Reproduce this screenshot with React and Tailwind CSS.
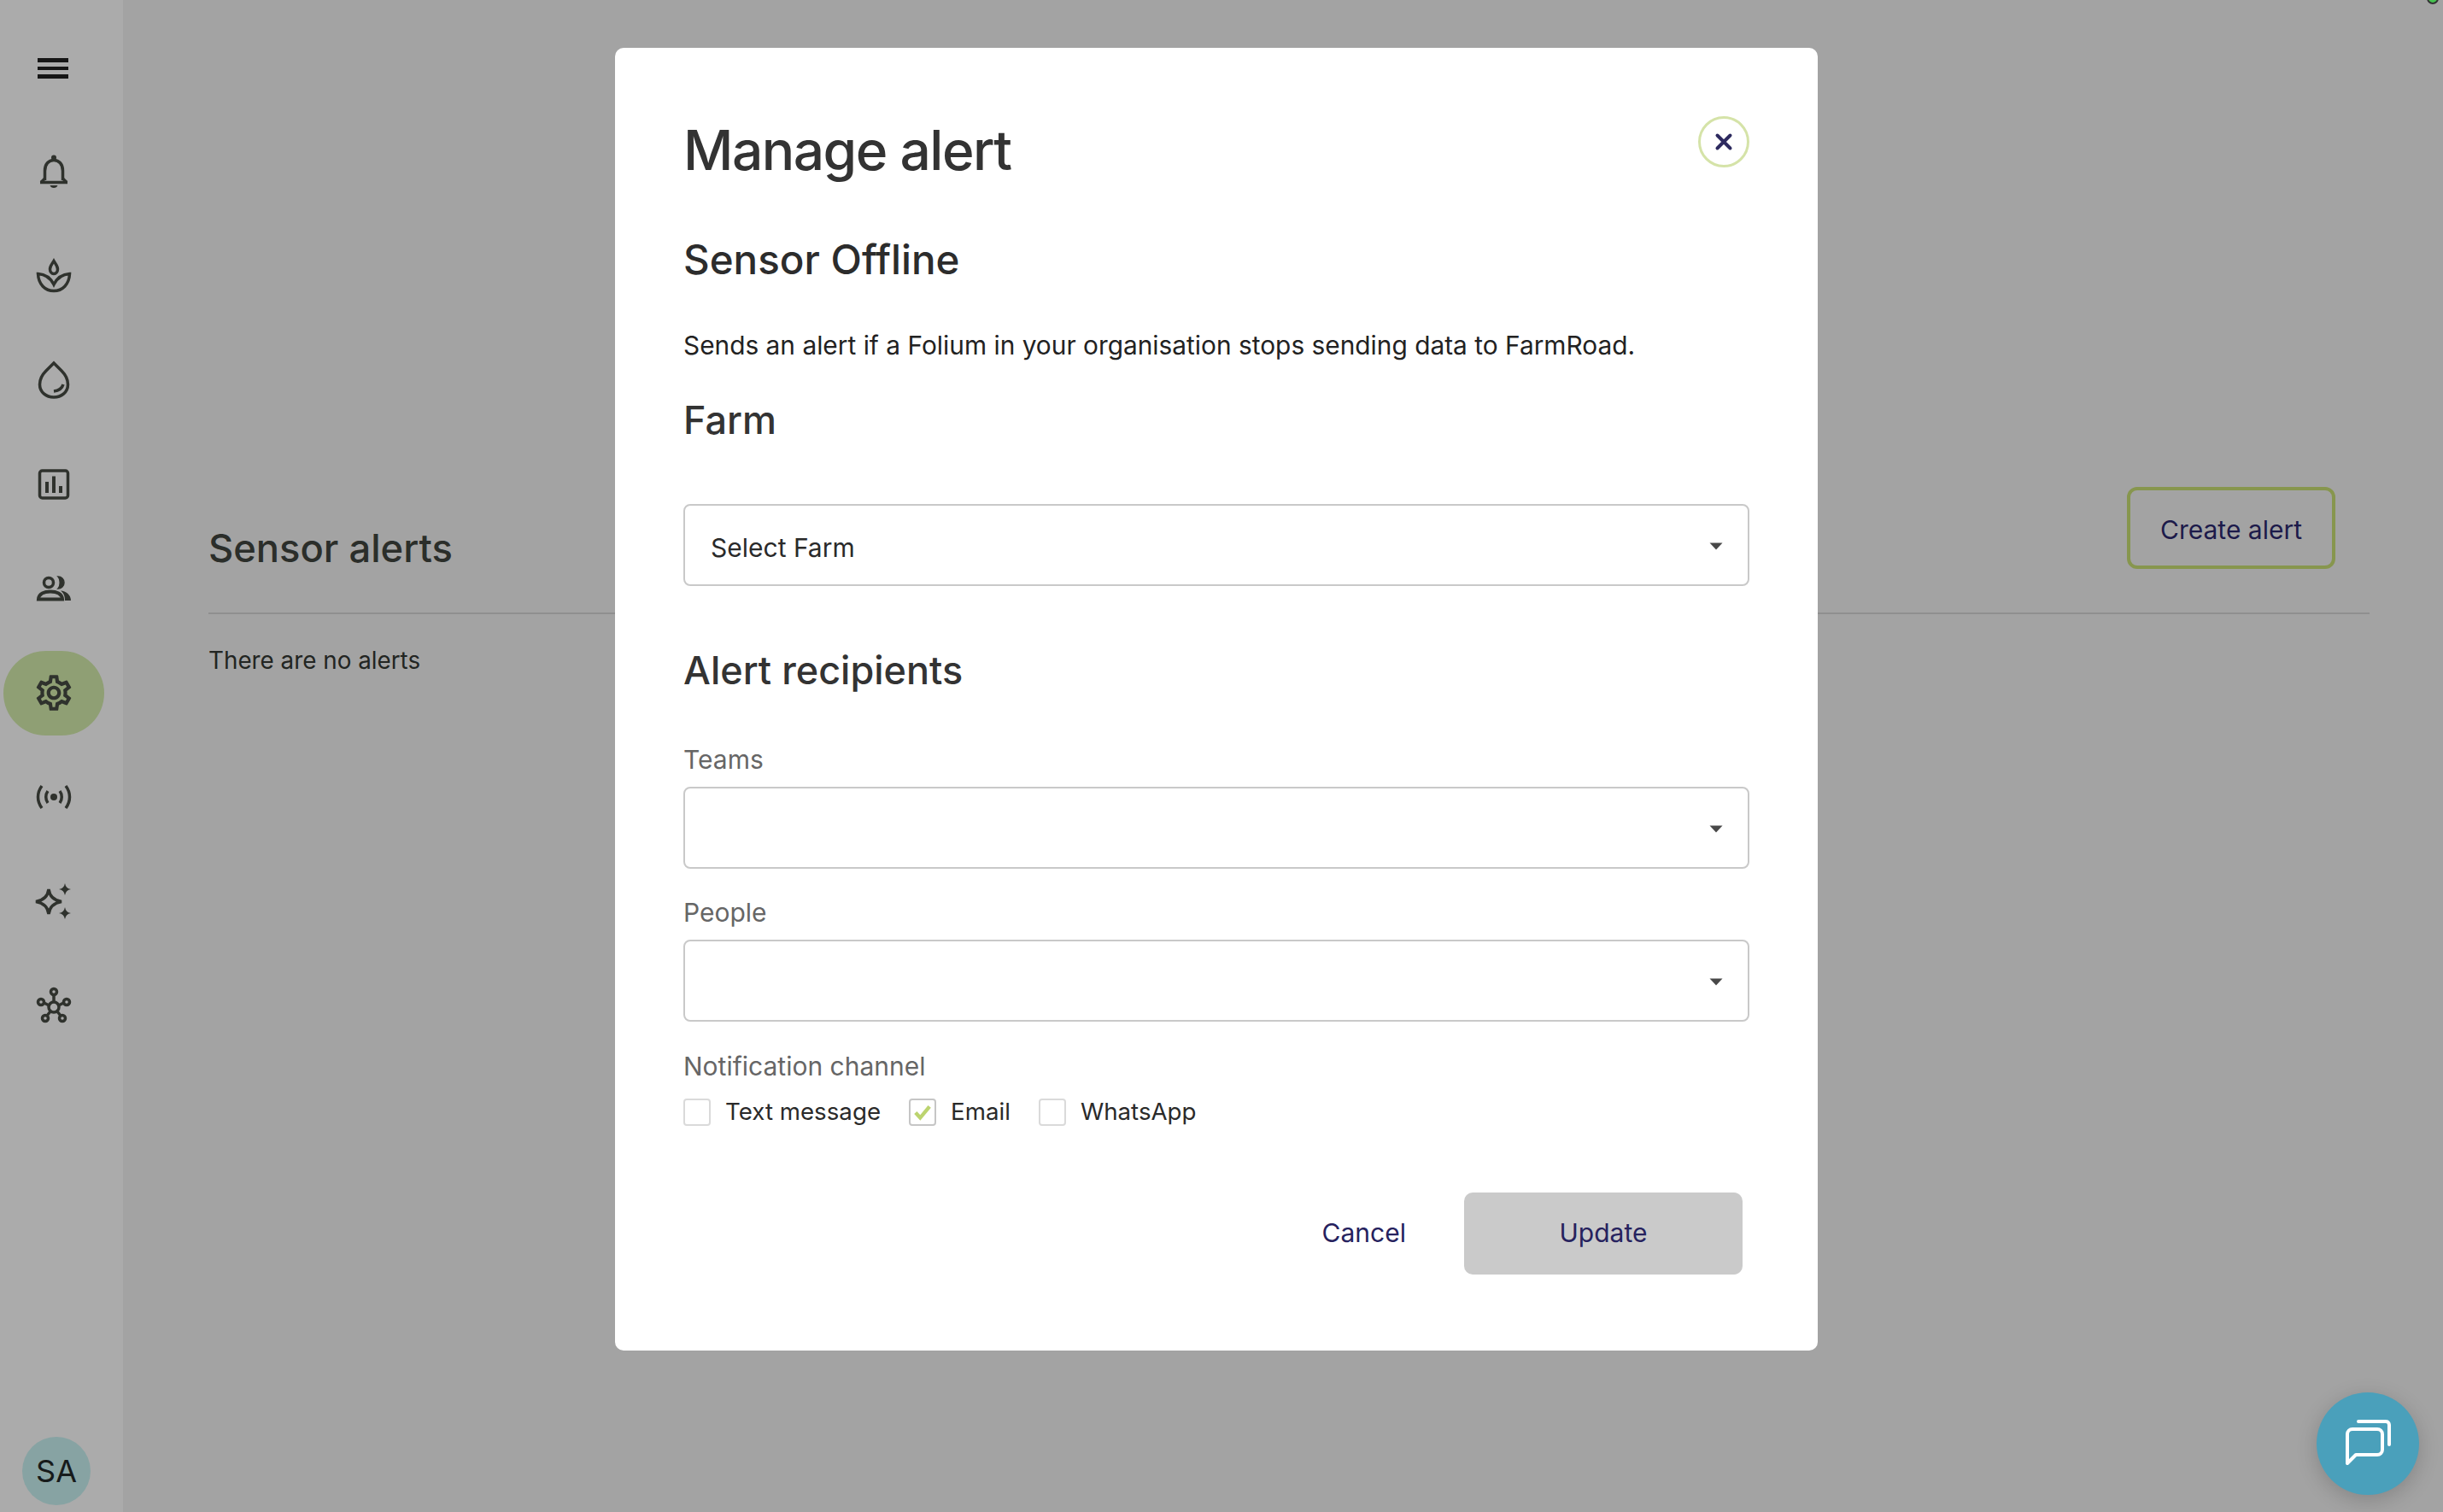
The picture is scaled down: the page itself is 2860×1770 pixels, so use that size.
import React from "react";
import { MdOutlineSettings } from "react-icons/md";

const ink = "#2f322d";

const Icon = ({ children }) => (
  <svg width="40" height="40" viewBox="0 0 40 40" fill="none" stroke={ink} strokeWidth="3.5" className="overflow-visible">
    {children}
  </svg>
);

const navItems = [
  {
    id: "alerts",
    icon: (
      <Icon>
        <circle cx="20" cy="3.5" r="3" fill={ink} stroke="none" />
        <path d="M9.5 30V19C9.5 11 14 6.5 20 6.5S30.5 11 30.5 19V30" />
        <path d="M4 32.5H36" />
        <path d="M9.5 28L5 32.5M30.5 28L35 32.5" />
        <path d="M15.5 36H24.5C23.5 40 16.5 40 15.5 36Z" fill={ink} stroke="none" />
      </Icon>
    ),
  },
  {
    id: "crops",
    icon: (
      <Icon>
        <path d="M20 2.5C18 6 15.5 8.5 15.5 12C15.5 15 17.5 17.5 20 17.5S24.5 15 24.5 12C24.5 8.5 22 6 20 2.5Z" />
        <path d="M1.5 17.5C2 30 10 37.5 20 37.5S38 30 38.5 17.5C30 18 24 22 20 30C16 22 10 18 1.5 17.5Z" />
      </Icon>
    ),
  },
  {
    id: "water",
    icon: (
      <Icon>
        <path d="M20 0L29 9C34 14 36.5 19 36.5 25C36.5 34 29 40 20 40S3.5 34 3.5 25C3.5 19 6 14 11 9Z" />
        <path d="M20 33Q29 32 31 25" />
      </Icon>
    ),
  },
  {
    id: "reports",
    icon: (
      <Icon>
        <rect x="3.5" y="4" width="33" height="32" rx="3" />
        <path d="M10 17H14V30H10ZM18 10.5H22V30H18ZM26 22H30V30H26Z" fill={ink} stroke="none" />
      </Icon>
    ),
  },
  {
    id: "people",
    icon: (
      <Icon>
        <circle cx="14" cy="13" r="5.5" />
        <path d="M25 6A7 7 0 0 1 25 20C28 17 28 9 25 6Z" fill={ink} stroke={ink} strokeWidth="1.5" />
        <path d="M2 32.5C2.5 26 9 23.5 16 23.5S29.5 26 30 32.5Z" strokeWidth="4" />
        <path d="M28 22.5C34 23 40 27 40 34H33C33 29 32 26 28 22.5Z" fill={ink} stroke="none" />
      </Icon>
    ),
  },
  {
    id: "settings",
    active: true,
    icon: <MdOutlineSettings size={50} color={ink} />,
  },
  {
    id: "sensors",
    icon: (
      <Icon>
        <circle cx="20" cy="20" r="4" fill={ink} stroke="none" />
        <path d="M13 13C10 17 10 23 13 27M27 13C30 17 30 23 27 27" strokeWidth="3.5" />
        <path d="M6 7C0 15 0 25 6 33M34 7C40 15 40 25 34 33" strokeWidth="3.5" />
      </Icon>
    ),
  },
  {
    id: "insights",
    icon: (
      <Icon>
        <path d="M14 6C15 14 20 19 29 20.5C20 22 15 27 14 35C13 27 8 22 -1 20.5C8 19 13 14 14 6Z" />
        <path d="M33 -1Q34 5 40 6Q34 7 33 13Q32 7 26 6Q32 5 33 -1ZM33 27Q34 33 40 34Q34 35 33 41Q32 35 26 34Q32 33 33 27Z" fill={ink} stroke="none" />
      </Icon>
    ),
  },
  {
    id: "network",
    icon: (
      <Icon>
        <circle cx="20" cy="22" r="6" />
        <circle cx="20" cy="4" r="3.5" />
        <circle cx="5" cy="16" r="3.5" />
        <circle cx="35" cy="16" r="3.5" />
        <circle cx="10" cy="35" r="3.5" />
        <circle cx="30" cy="35" r="3.5" />
        <path d="M20 8V16M8.5 17L14.5 20M31.5 17L25.5 20M12 32L16 27M28 32L24 27" />
      </Icon>
    ),
  },
];

const Sidebar = () => (
  <aside className="flex h-full w-[144px] shrink-0 flex-col bg-[#ababab] pt-[18px]">
    <div className="flex h-[122px] w-[126px] items-center justify-center pt-[2px] pr-[2px]">
      <div className="flex w-[36px] flex-col gap-[5px]">
        <span className="h-[4.5px] bg-[#161616]" />
        <span className="h-[4.5px] bg-[#161616]" />
        <span className="h-[4.5px] bg-[#161616]" />
      </div>
    </div>
    {navItems.map((item) => (
      <div key={item.id} className="flex h-[122px] w-[126px] items-center justify-center">
        <div
          className={`flex h-[99px] w-[118px] items-center justify-center rounded-[50px] ${
            item.active ? "bg-[#8f9f74]" : ""
          }`}
        >
          {item.icon}
        </div>
      </div>
    ))}
    <div className="mt-auto mb-[8px] ml-[26px] flex size-[80px] items-center justify-center rounded-full bg-[#87a3a3] text-[36px] text-[#171b1b]">
      SA
    </div>
  </aside>
);

const Caret = () => (
  <svg width="16" height="9" viewBox="0 0 16 9" className="mt-[2px]">
    <path d="M0.5 0.5H15.5L8 8.5Z" fill="#484848" />
  </svg>
);

const SelectBox = ({ value }) => (
  <div className="flex h-[96px] w-[1248px] items-center justify-between rounded-[8px] border-2 border-[#c9c9c9] pr-[29px] pl-[30px]">
    <span className="pt-[6px] text-[30px] text-[#2a2a2a]">{value}</span>
    <Caret />
  </div>
);

const Check = ({ label, checked }) => (
  <label className="flex items-center gap-[17px]">
    <span
      className={`flex size-[32px] items-center justify-center rounded-[4px] border-2 ${
        checked ? "border-[#c6c6c6]" : "border-[#dadada]"
      }`}
    >
      {checked && (
        <svg width="24" height="24" viewBox="0 0 22 22" fill="none">
          <path d="M3.5 11.5L8.5 17L18.5 5" stroke="#bcd46f" strokeWidth="4" />
        </svg>
      )}
    </span>
    <span className="text-[27.7px] text-[#2a2a2a]">{label}</span>
  </label>
);

const Modal = () => (
  <div className="absolute inset-0 flex items-start justify-center pt-[56px] pr-[12px]">
    <div className="h-[1525px] w-[1408px] rounded-[10px] bg-white px-[80px] pt-[80px]">
      <div className="flex items-start justify-between">
        <h1 className="h-[78px] pt-[1px] text-[64px] leading-[78px] font-medium tracking-[-1.5px] text-[#333333]">Manage alert</h1>
        <button className="flex size-[60px] items-center justify-center rounded-full border-[3px] border-[#d5e3a8]">
          <svg width="22" height="22" viewBox="0 0 22 22" fill="none">
            <path d="M3.5 3.5L18.5 18.5M18.5 3.5L3.5 18.5" stroke="#2d2a5f" strokeWidth="4" strokeLinecap="round" />
          </svg>
        </button>
      </div>
      <h2 className="mt-[58px] h-[64px] text-[47.5px] leading-[64px] font-medium text-[#2c2c2c]">Sensor Offline</h2>
      <p className="mt-[48px] h-[40px] text-[29.85px] leading-[40px] text-[#222222]">
        Sends an alert if a Folium in your organisation stops sending data to FarmRoad.
      </p>
      <h2 className="mt-[39px] h-[58px] text-[45px] leading-[58px] font-medium text-[#333333]">Farm</h2>
      <div className="mt-[69px]">
        <SelectBox value="Select Farm" />
      </div>
      <h2 className="mt-[67px] h-[64px] text-[45px] leading-[64px] font-medium text-[#333333]">Alert recipients</h2>
      <div className="mt-[52px] h-[40px] text-[30px] leading-[40px] text-[#666666]">Teams</div>
      <div className="mt-[12px]">
        <SelectBox value="" />
      </div>
      <div className="mt-[31px] h-[40px] text-[30px] leading-[40px] text-[#666666]">People</div>
      <div className="mt-[12px]">
        <SelectBox value="" />
      </div>
      <div className="mt-[32px] h-[40px] text-[30px] leading-[40px] text-[#666666]">Notification channel</div>
      <div className="mt-[13px] flex items-center gap-[33px]">
        <Check label="Text message" />
        <Check label="Email" checked />
        <Check label="WhatsApp" />
      </div>
      <div className="mt-[73px] flex w-[1240px] items-center justify-end gap-[68px]">
        <button className="text-[30px] text-[#26225e]">Cancel</button>
        <button className="h-[96px] w-[326px] rounded-[10px] bg-[#cacaca] text-[30px] text-[#26225e]">Update</button>
      </div>
    </div>
  </div>
);

export default function App() {
  return (
    <div className="relative flex h-[1770px] w-[2860px] overflow-hidden bg-[#a3a3a3] font-['Inter',sans-serif]">
      <Sidebar />
      <main className="flex-1 pt-[570px] pr-[86px] pl-[100px]">
        <div className="flex h-[149px] items-start justify-between border-b-2 border-[#8f8f8f] pr-[40px]">
          <h2 className="mt-[42px] text-[45.3px] leading-[60px] font-medium text-[#2b2e2a]">Sensor alerts</h2>
          <button className="h-[96px] w-[244px] rounded-[12px] border-4 border-[#87964e] pt-[5px] text-[30px] text-[#1c1a4a]">
            Create alert
          </button>
        </div>
        <p className="mt-[34px] text-[27.8px] leading-[40px] text-[#222522]">There are no alerts</p>
      </main>
      <Modal />
      <span className="absolute top-[-9px] right-[5px] size-[14px] rounded-full border-2 border-[#333333] bg-[#45c24f]" />
      <button className="absolute top-[1630px] left-[2712px] flex size-[120px] items-center justify-center rounded-full bg-[#4aa0bb] shadow-[0_6px_24px_rgba(0,0,0,0.18)]">
        <svg width="60" height="60" viewBox="0 0 60 60" fill="none" stroke="white" strokeWidth="4" strokeLinecap="round" strokeLinejoin="round">
          <path d="M6 53V19A6 6 0 0 1 12 13H41A6 6 0 0 1 47 19V37A6 6 0 0 1 41 43H16Z" />
          <path d="M19 4H51A4 4 0 0 1 55 8V31" />
        </svg>
      </button>
    </div>
  );
}
